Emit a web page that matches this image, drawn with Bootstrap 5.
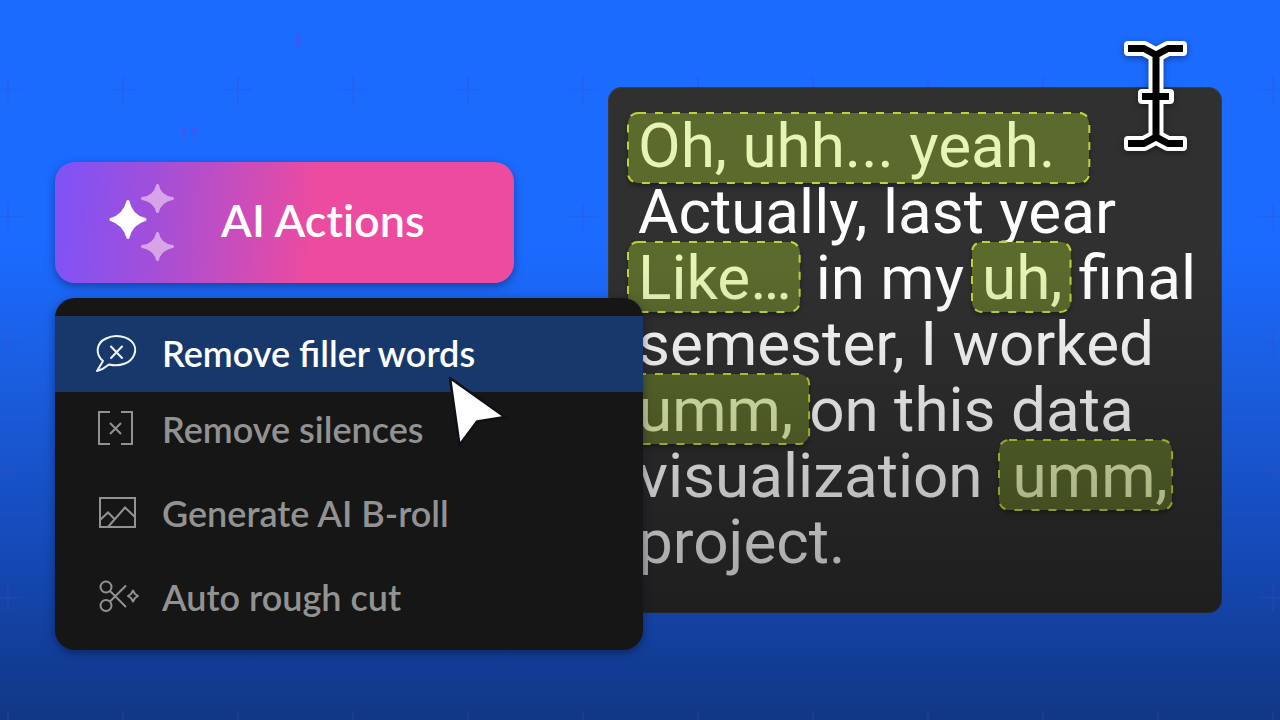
<!DOCTYPE html>
<html lang="en">
<head>
<meta charset="utf-8">
<meta name="viewport" content="width=device-width, initial-scale=1">
<title>AI Actions</title>
<link rel="stylesheet" href="https://cdn.jsdelivr.net/npm/bootstrap@5.3.0/dist/css/bootstrap.min.css">
<style>
  body { font-family: Lato, "Open Sans", sans-serif; background: #1b6bff; }
  .stage {
    background: linear-gradient(180deg, #1b6bff 0, #1b6bff 34%, #1a5cdd 54%, #1548b4 78%, #113785 100%);
    overflow: hidden;
  }
  .backdrop { inset: 0; z-index: 0; }
  .board {
    display: grid;
    grid-template-columns: 553fr 35fr 579fr;
    align-items: start;
    padding: 87px 58px 48px 55px;
    z-index: 1;
  }
  .actions { grid-column: 1 / 3; grid-row: 1; padding-top: 75px; z-index: 2; }
  .transcript { grid-column: 2 / 4; grid-row: 1; z-index: 1; }

  .ai-btn {
    width: 78%; height: 121px; gap: 40px;
    border: 0; border-radius: 20px; padding: 0 0 6px 48px;
    color: #fff; font-size: 45px; font-weight: 600; line-height: 60px;
    font-variant-ligatures: none;
    background: linear-gradient(95deg, #8252f4 3%, #a24fd9 22%, #ec4ba0 56%);
    box-shadow: 0 3px 8px rgba(10, 25, 80, .5);
  }
  .ai-btn:hover { color: #fff; }

  .menu-box {
    margin-top: 15px; padding: 18px 0 14px;
    background: #161616; border-radius: 20px;
    box-shadow: 0 3px 10px rgba(5, 15, 50, .5);
  }
  .menu-list { gap: 8px; }
  .menu-row {
    height: 76px; gap: 20px; padding: 0 39px 2px; border: 0;
    width: 100%; background: transparent; color: #929292;
    font-size: 36px; font-weight: 600; line-height: 48px; text-align: left;
  }
  .menu-row.current { background: #18386b; color: #fff; margin-bottom: -8px; }
  .menu-row svg { flex: none; }

  .transcript {
    background: #303030; border-radius: 14px;
    padding: 26px 16px 38px 30px; color: #fff;
    font-family: Roboto, "Liberation Sans", sans-serif;
    font-size: 62px; line-height: 66px; white-space: nowrap;
    box-shadow: inset 0 0 0 1px rgba(90, 80, 70, .35);
  }
  .transcript p { margin: 0; height: 66px; }
  .shade {
    inset: 0; border-radius: 14px; pointer-events: none; z-index: 3;
    background: linear-gradient(180deg, rgba(0,0,0,0) 34%, rgba(0,0,0,.32) 90%, rgba(0,0,0,.36) 100%);
  }
  .filler {
    height: 70px; padding: 0 8px 0 10px; margin-left: -10px; color: #e6f4b4;
    background: #5b6a2d; border-radius: 10px;
    box-shadow: 0 3px 5px rgba(0, 0, 0, .35);
  }
  .transcript p + p .filler { margin-top: -3px; padding-top: 3px; }
  .filler-opening { padding-right: 34px; }
  .filler-trailing { padding-left: 14px; padding-right: 4px; }
  .filler svg { inset: 0; overflow: visible; }
  .filler rect { fill: none; stroke: #bfd23c; stroke-width: 2; stroke-dasharray: 8 9; }

  .ibeam { right: 30px; top: -51px; z-index: 4; filter: drop-shadow(0 2px 3px rgba(0,0,0,.4)); }
  .pointer { left: 66%; top: 74px; z-index: 3; }

  @media (max-width: 1100px) {
    .board { display: block; padding: 32px 16px; }
    .actions { padding: 0 0 72px; }
    .transcript { white-space: normal; }
    .transcript p { height: auto; flex-wrap: wrap; }
  }
</style>
</head>
<body>
<main class="stage position-relative min-vh-100">
  <svg class="backdrop position-absolute w-100 h-100" aria-hidden="true">
    <defs>
      <pattern id="crosses" x="-50" y="26" width="115" height="127" patternUnits="userSpaceOnUse">
        <path d="M44 63.500H72M58 50V77" stroke="#3a45c8" stroke-width="1.500" opacity=".32"/>
      </pattern>
    </defs>
    <rect width="100%" height="100%" fill="url(#crosses)"/>
    <g fill="#5a4be8" opacity=".45">
      <path d="M295 36l4-4 3 14h-7z"/>
      <path d="M182 128l5-3-2 13-4 1zM191 126l8 2-3 8-5-1zM193 140h3v7z"/>
    </g>
  </svg>

  <div class="board position-relative">
    <section class="actions position-relative">
      <button type="button" class="btn ai-btn d-flex align-items-center">
        <svg width="78" height="88" viewBox="0 0 78 88" aria-hidden="true" stroke-linejoin="round" stroke-width="3">
          <path fill="#fff" stroke="#fff" d="M25 25.500Q28 40 42 43.500Q28 47.500 25 61.500Q21 47.500 8 43.500Q21 40 25 25.500Z"/>
          <g fill="#d9a3ea" stroke="#d9a3ea">
            <path d="M54.500 9.500Q57 21 69.500 22.500Q57 25 54.500 35.500Q52 25 39.500 22.500Q52 21 54.500 9.500Z"/>
            <path d="M54.500 57.500Q57 69 69.500 70.500Q57 73 54.500 83.500Q52 73 39.500 70.500Q52 69 54.500 57.500Z"/>
          </g>
        </svg>
        <span>AI Actions</span>
      </button>

      <div class="menu-box position-relative">
        <div class="menu-list d-flex flex-column">
          <button type="button" class="menu-row current d-flex align-items-center">
            <svg width="48" height="48" viewBox="0 0 48 48" fill="none" stroke="#eef6ff" stroke-width="2" stroke-linejoin="round" stroke-linecap="round" aria-hidden="true">
              <path d="M3 42L9 32C1 25 2 14 12 9.500C21 5 34 7 39 14C44 21 40 31 31 34.500C26 36.500 19 36.500 15 35.500C12 38 9 40.500 3 42Z"/>
              <path d="M17 17.500L28 29M28 17.500L17 29"/>
            </svg>
            <span>Remove filler words</span>
          </button>
          <button type="button" class="menu-row d-flex align-items-center">
            <svg width="48" height="48" viewBox="0 0 48 48" fill="none" stroke="#929292" stroke-width="2" aria-hidden="true">
              <path d="M16 7H5V39H16M27 7H38V39H27M16 18L27 29M27 18L16 29"/>
            </svg>
            <span>Remove silences</span>
          </button>
          <button type="button" class="menu-row d-flex align-items-center">
            <svg width="48" height="48" viewBox="0 0 48 48" fill="none" stroke="#929292" stroke-width="2" aria-hidden="true">
              <path d="M6 9H41V38H6ZM6 31L14 23.500L20 29.500M14 38L31 18.500L41 28"/>
            </svg>
            <span>Generate AI B-roll</span>
          </button>
          <button type="button" class="menu-row d-flex align-items-center">
            <svg width="48" height="48" viewBox="0 0 48 48" fill="none" stroke="#929292" stroke-width="2" stroke-linejoin="round" aria-hidden="true">
              <circle cx="12" cy="14" r="5.500"/><circle cx="12" cy="32.500" r="5.500"/>
              <path d="M16 18L32 34M16 28.500L32 12.500M39 17.500L41 21L44 23L41 25L39 28.500L37 25L34 23L37 21Z"/>
            </svg>
            <span>Auto rough cut</span>
          </button>
        </div>
        <svg class="pointer position-absolute" width="66" height="80" viewBox="0 0 66 80" aria-hidden="true">
          <path d="M7 6L62 45L34 49.500L16.500 73Z" fill="#fff" stroke="#101018" stroke-width="2.500" stroke-linejoin="round"/>
        </svg>
      </div>
    </section>

    <article class="transcript position-relative">
      <p class="d-flex"><span class="filler filler-opening position-relative">Oh, uhh... yeah.<svg class="position-absolute w-100 h-100" aria-hidden="true"><rect width="100%" height="100%" rx="10"/></svg></span></p>
      <p>Actually, last year</p>
      <p class="d-flex"><span class="filler position-relative">Like…<svg class="position-absolute w-100 h-100" aria-hidden="true"><rect width="100%" height="100%" rx="10"/></svg></span><span class="ms-3">in my</span><span class="filler position-relative ms-2">uh,<svg class="position-absolute w-100 h-100" aria-hidden="true"><rect width="100%" height="100%" rx="10"/></svg></span><span class="ms-2">final</span></p>
      <p>semester, I worked</p>
      <p class="d-flex"><span class="filler position-relative pe-3">umm,<svg class="position-absolute w-100 h-100" aria-hidden="true"><rect width="100%" height="100%" rx="10"/></svg></span><span>on this data</span></p>
      <p class="d-flex"><span>visualization</span><span class="filler filler-trailing position-relative ms-3">umm,<svg class="position-absolute w-100 h-100" aria-hidden="true"><rect width="100%" height="100%" rx="10"/></svg></span></p>
      <p>project.</p>
      <div class="shade position-absolute"></div>
      <svg class="ibeam position-absolute" width="72" height="122" viewBox="0 0 72 122" fill="none" aria-hidden="true">
        <g fill="#fff">
          <rect x="4" y="5" width="20" height="15" rx="4"/><rect x="47" y="5" width="20" height="15" rx="4"/>
          <rect x="4" y="100" width="20" height="15" rx="4"/><rect x="47" y="100" width="20" height="15" rx="4"/>
          <rect x="18" y="53" width="36" height="15" rx="4"/>
        </g>
        <path d="M12 12.500H24L36 19L48 12.500H59M36 20V102M12 107.500H24L36 101L48 107.500H59" stroke="#fff" stroke-width="15" stroke-linejoin="round"/>
        <path d="M8 12.500H24L36 19L48 12.500H63M36 19V102M22 60.500H49M8 107.500H24L36 101L48 107.500H63" stroke="#000" stroke-width="7" stroke-linejoin="round"/>
      </svg>
    </article>
  </div>
</main>
<script src="https://cdn.jsdelivr.net/npm/bootstrap@5.3.0/dist/js/bootstrap.bundle.min.js"></script>
</body>
</html>
